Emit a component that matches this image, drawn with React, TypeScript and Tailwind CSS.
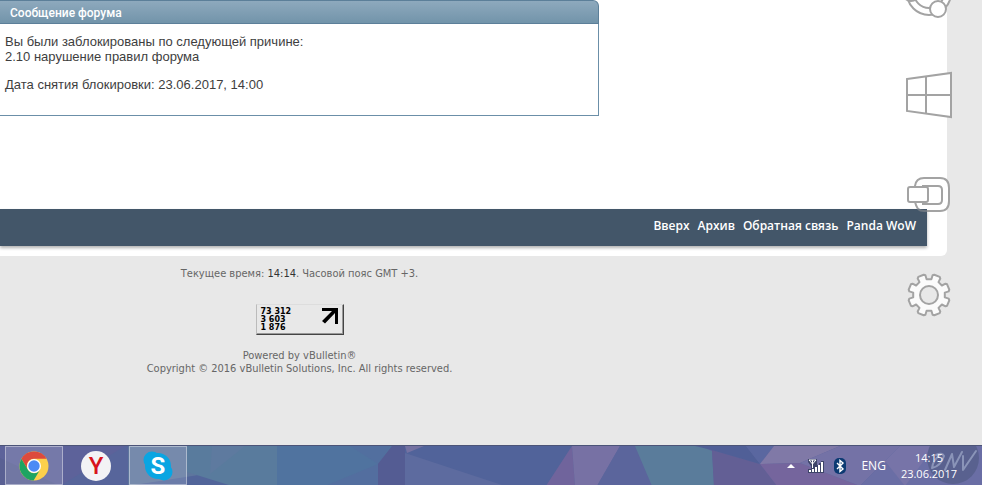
import React from "react";

const footerLinks = ["Вверх", "Архив", "Обратная связь", "Panda WoW"];

const counterRows = ["73 312", "3 603", "1 876"];

const facets = [
  { points: "0,0 130,0 60,40 0,40", fill: "#5d629a" },
  { points: "0,12 60,40 0,40", fill: "#596093" },
  { points: "60,40 125,0 135,0 128,40", fill: "#57659b" },
  { points: "128,0 205,0 200,30 128,40", fill: "#5e769e" },
  { points: "128,40 205,28 232,40", fill: "#52659a" },
  { points: "187,0 278,0 278,40 232,40 187,26", fill: "#597b9d" },
  { points: "212,0 245,0 210,28", fill: "#5e7a9f" },
  { points: "277,0 392,0 378,18 378,40 277,40", fill: "#50739f" },
  { points: "350,0 390,0 378,18", fill: "#526f9f" },
  { points: "325,40 378,18 378,40", fill: "#536e9f" },
  { points: "392,0 405,0 405,40 378,40 378,18", fill: "#545c93" },
  { points: "405,0 572,0 546,40 405,40", fill: "#51639a" },
  { points: "405,7 505,40 405,40", fill: "#5d6b9f" },
  { points: "405,0 424,0 407,7", fill: "#7572a2" },
  { points: "572,0 575,40 546,40", fill: "#70649c" },
  { points: "572,0 620,0 597,40 575,40", fill: "#7771a4" },
  { points: "620,0 636,0 652,40 597,40", fill: "#5b659c" },
  { points: "635,0 700,0 712,5 714,40 652,40", fill: "#5a7c9b" },
  { points: "712,4 760,18 777,40 714,40", fill: "#635f95" },
  { points: "695,0 746,0 760,18 712,4", fill: "#505f97" },
  { points: "746,0 774,0 760,18", fill: "#5a67a0" },
  { points: "774,0 840,0 800,17 760,18", fill: "#8079a7" },
  { points: "760,18 800,17 860,40 777,40", fill: "#75659d" },
  { points: "840,0 900,0 860,40 800,17", fill: "#7472a6" },
  { points: "900,0 982,0 982,40 860,40", fill: "#6a6ea5" },
  { points: "900,0 935,0 905,40 885,15", fill: "#7774a8" },
];

const gearPoints = Array.from({ length: 8 })
  .flatMap((_, i) => {
    const mid = 22.5 + i * 45;
    return [
      [16, mid - 14],
      [20, mid - 12],
      [21, mid - 8],
      [21, mid + 8],
      [20, mid + 12],
      [16, mid + 14],
    ];
  })
  .map(([r, deg]) => {
    const a = (deg * Math.PI) / 180;
    return `${(25 + r * Math.cos(a)).toFixed(1)},${(24 + r * Math.sin(a)).toFixed(1)}`;
  })
  .join(" ");

function CharmsBar() {
  const line = { fill: "none", stroke: "#a3a3a3", strokeWidth: 2 };
  return (
    <aside className="absolute top-[-29px] right-[30px] flex flex-col gap-[52px]">
      <button aria-label="Share" className="size-12">
        <svg viewBox="0 0 48 48" className="size-12" {...line}>
          <circle cx="25" cy="22" r="22" fill="#fff" />
          <circle cx="25" cy="22" r="15" />
          <circle cx="7" cy="22" r="8" fill="#fff" />
          <circle cx="34" cy="38" r="8" fill="#fff" />
        </svg>
      </button>
      <button aria-label="Start" className="size-12">
        <svg viewBox="0 0 48 48" className="size-12" {...line}>
          <path d="M3 8 47 2V46L3 40Z" fill="#fff" />
          <path d="M22 5.5V42.5M3 24H47" />
        </svg>
      </button>
      <button aria-label="Devices" className="size-12">
        <svg viewBox="0 0 48 48" className="size-12" {...line}>
          <path d="M11 15Q12 7 20 7H36Q45 7 45 17V30Q45 38 38 38H14L11 31Z" fill="#fff" stroke="none" />
          <path d="M23 38V40H36Q45 40 45 30" stroke="none" fill="#fff" />
          <path d="M11 15Q12 7 20 7H36Q45 7 45 17V30Q45 40 36 40H23" />
          <path d="M11 31Q12 35 14 38" />
          <path d="M14 38Q16 40 20 40H23" stroke="#6d7680" />
          <path d="M18 15H34Q38 15 38 19V29Q38 33 34 33H18" />
          <rect x="4" y="16" width="20" height="15" rx="2" fill="#fff" />
        </svg>
      </button>
      <button aria-label="Settings" className="size-12">
        <svg viewBox="0 0 48 48" className="size-12" {...line} strokeLinejoin="round">
          <polygon points={gearPoints} fill="#fbfbfb" />
          <circle cx="25" cy="24" r="9" fill="#e8e8e8" />
        </svg>
      </button>
    </aside>
  );
}

function Wallpaper() {
  return (
    <svg
      viewBox="0 0 982 40"
      preserveAspectRatio="xMaxYMin slice"
      className="absolute inset-0 size-full"
      aria-hidden="true"
    >
      <rect width="982" height="40" fill="#5b659c" />
      {facets.map((f) => (
        <polygon key={f.points} points={f.points} fill={f.fill} />
      ))}
      <circle cx="953" cy="12" r="26" fill="#59618f" />
      {/* signature scribble on the desktop picture */}
      <path
        d="M940 9Q933 14 932 22Q941 20 944 10Q942 6 936 9M945 24 952 8 954 21 962 6M963 10 963 24 976 5"
        fill="none"
        stroke="#8a94b8"
        strokeWidth="2"
        strokeLinejoin="round"
        strokeLinecap="round"
      />
    </svg>
  );
}

function Taskbar() {
  return (
    <footer className="relative mt-auto flex h-10 items-stretch justify-between border-t border-[#4c5478] font-['Open_Sans',sans-serif] text-white">
      <Wallpaper />
      <div className="relative flex gap-1 pl-[5px]">
        <button aria-label="Google Chrome" className="flex w-[58px] items-center justify-center border border-white/40 bg-white/15">
          <svg viewBox="0 0 30 30" className="size-[30px]">
            <circle cx="15" cy="15" r="14.5" fill="#fcd04b" />
            <path d="M2.4 7.8A14.5 14.5 0 0 1 27.6 7.8H15A7.2 7.2 0 0 0 8.8 18.6Z" fill="#dc4a3d" />
            <path d="M2.4 7.8A14.5 14.5 0 0 0 14.6 29.5L21.2 18.6A7.2 7.2 0 0 1 8.8 18.6Z" fill="#1da462" />
            <circle cx="15" cy="15" r="7" fill="#fff" />
            <circle cx="15" cy="15" r="5.7" fill="#4c8bf5" />
          </svg>
        </button>
        <button aria-label="Yandex" className="flex w-[58px] items-center justify-center">
          <svg viewBox="0 0 30 30" className="size-[30px]">
            <circle cx="15" cy="15" r="15" fill="#f3f3f5" />
            <text x="15" y="23" textAnchor="middle" fontSize="24" fontWeight="500" fontFamily="Roboto, sans-serif" fill="#d8141c">
              Y
            </text>
          </svg>
        </button>
        <button aria-label="Skype" className="flex w-[58px] items-center justify-center border border-white/40 bg-white/15">
          <svg viewBox="0 0 30 30" className="size-[30px]">
            <g fill="#0aa5e2">
              <circle cx="15" cy="15" r="13" />
              <circle cx="9" cy="9" r="8.5" />
              <circle cx="21" cy="21" r="8.5" />
            </g>
            <text x="15" y="23" textAnchor="middle" fontSize="24" fontWeight="700" fontFamily="Roboto, sans-serif" fill="#fff">
              S
            </text>
          </svg>
        </button>
      </div>
      <div className="relative flex items-center pr-[25px]">
        <button aria-label="Show hidden icons" className="mr-3">
          <svg viewBox="0 0 8 4" className="h-1 w-2">
            <path d="M0 4 4 0 8 4Z" fill="#fff" />
          </svg>
        </button>
        <button aria-label="Network" className="mr-[9px]">
          <svg viewBox="0 0 18 16" className="h-4 w-[18px]">
            <path d="M1 1H10V7H12V5H14V3H17V15H1V11H4V8L1 4Z" fill="#3d4468" />
            <path d="M2 2H9L5.500 6ZM5.500 2V10" fill="none" stroke="#fff" />
            <path d="M2 12H4V14H2ZM5 11H7V14H5ZM8 9H10V14H8ZM11 7H13V14H11ZM14 4H16V14H14Z" fill="#fff" />
          </svg>
        </button>
        <button aria-label="Bluetooth" className="mr-[15px]">
          <svg viewBox="0 0 12 16" className="h-4 w-3">
            <rect width="12" height="16" rx="5" fill="#0c3a72" />
            <path d="M3 5 9 11 6 13.500V2.500L9 5 3 11" fill="none" stroke="#fff" strokeWidth="1.400" />
          </svg>
        </button>
        <button className="mr-[15px] text-xs">ENG</button>
        <div className="text-center text-[11px] leading-4">
          <div>14:15</div>
          <div>23.06.2017</div>
        </div>
      </div>
    </footer>
  );
}

export default function App() {
  return (
    <div className="relative flex min-h-screen flex-col overflow-hidden bg-[#e8e8e8] font-['DejaVu_Sans_Condensed','Noto_Sans',sans-serif]">
      <main className="mr-[35px] rounded-br-md bg-white pb-[10px]">
        <section className="w-[61vw] min-w-[480px]">
          <h1 className="h-6 rounded-tr-md border border-l-0 border-[#5c7f99] bg-linear-to-b from-[#8ea9bd] to-[#7294aa] pl-[10px] font-['Roboto',sans-serif] text-xs leading-6 font-medium text-white">
            Сообщение форума
          </h1>
          <div className="border-r border-b border-[#6b8fa8] px-[5px] pt-[10px] pb-[23px] font-['Liberation_Sans',sans-serif] text-[13px] leading-[15px] text-[#3e3e3e]">
            <p>
              Вы были заблокированы по следующей причине:
              <br />
              2.10 нарушение правил форума
            </p>
            <p className="mt-[13px]">Дата снятия блокировки: 23.06.2017, 14:00</p>
          </div>
        </section>
        <nav className="mt-[93px] mr-5 flex h-[37px] justify-end gap-2 bg-[#435669] pt-[9px] pr-[11px] font-['Open_Sans',sans-serif] text-xs font-semibold text-white shadow-[0_2px_3px_rgba(0,0,0,0.3)]">
          {footerLinks.map((label) => (
            <a key={label} href="#" className="leading-4">
              {label}
            </a>
          ))}
        </nav>
      </main>

      <div className="flex w-[61vw] min-w-[480px] flex-col items-center pt-[11px] pb-8 text-center text-[11px] leading-[13px] text-[#666]">
        <p>
          Текущее время: <span className="text-[#333]">14:14</span>. Часовой пояс GMT +3.
        </p>
        <a
          href="#"
          className="mt-6 flex h-[31px] w-[88px] justify-between border border-t-[#ddd] border-r-[#444] border-b-[#444] border-l-[#bbb] bg-[#e8e8e8] pt-[3px] pr-1 pl-1 text-left font-['DejaVu_Sans',sans-serif] text-[8px] leading-2 font-bold text-black shadow-[inset_-1px_-1px_#999]"
        >
          <span>
            {counterRows.map((row) => (
              <span key={row} className="block">
                {row}
              </span>
            ))}
          </span>
          <svg viewBox="0 0 17 17" className="size-[17px]" aria-hidden="true">
            <path d="M0 0H16V16H13V5L3 15.500 0 13 10 3H0Z" />
          </svg>
        </a>
        <p className="mt-[14px]">
          Powered by vBulletin®
          <br />
          Copyright © 2016 vBulletin Solutions, Inc. All rights reserved.
        </p>
      </div>

      <CharmsBar />
      <Taskbar />
    </div>
  );
}
